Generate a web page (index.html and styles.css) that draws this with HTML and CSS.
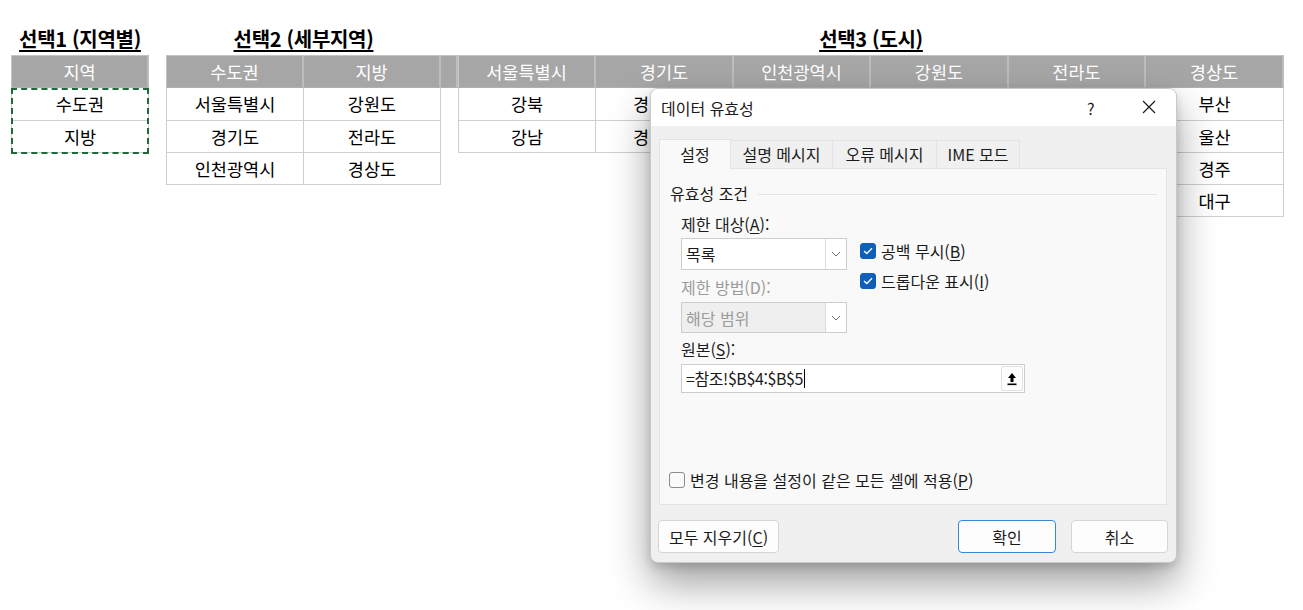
FILE: index.html
```html
<!DOCTYPE html>
<html lang="ko">
<head>
<meta charset="utf-8">
<title>데이터 유효성</title>
<link rel="stylesheet" href="styles.css">
</head>
<body>
<div class="sheet">
  <section class="group g1">
    <h2 class="title">선택1 (지역별)</h2>
    <div class="table">
      <div class="col w138 first">
        <div class="cell head">지역</div>
        <div class="selected">
          <div class="cell r1">수도권</div>
          <div class="cell">지방</div>
        </div>
      </div>
    </div>
  </section>

  <section class="group g2">
    <h2 class="title">선택2 (세부지역)</h2>
    <div class="table">
      <div class="col w138 first">
        <div class="cell head">수도권</div>
        <div class="cell r1">서울특별시</div>
        <div class="cell">경기도</div>
        <div class="cell">인천광역시</div>
      </div>
      <div class="col w137">
        <div class="cell head">지방</div>
        <div class="cell r1">강원도</div>
        <div class="cell">전라도</div>
        <div class="cell">경상도</div>
      </div>
    </div>
  </section>

  <div class="spacer"><div class="cell head"></div></div>

  <section class="group g3">
    <h2 class="title">선택3 (도시)</h2>
    <div class="table">
      <div class="col w138 first">
        <div class="cell head">서울특별시</div>
        <div class="cell r1">강북</div>
        <div class="cell">강남</div>
      </div>
      <div class="col w138">
        <div class="cell head">경기도</div>
        <div class="cell r1 clip">경</div>
        <div class="cell clip">경</div>
      </div>
      <div class="col w137">
        <div class="cell head">인천광역시</div>
        <div class="cell r1"></div>
        <div class="cell"></div>
      </div>
      <div class="col w138">
        <div class="cell head">강원도</div>
        <div class="cell r1"></div>
        <div class="cell"></div>
      </div>
      <div class="col w137">
        <div class="cell head">전라도</div>
        <div class="cell r1"></div>
        <div class="cell"></div>
      </div>
      <div class="col w138">
        <div class="cell head">경상도</div>
        <div class="cell r1">부산</div>
        <div class="cell">울산</div>
        <div class="cell">경주</div>
        <div class="cell">대구</div>
      </div>
    </div>
  </section>
</div>

<div class="dialog">
  <div class="titlebar">
    <span class="dtitle">데이터 유효성</span>
    <span class="help">?</span>
    <span class="close">
      <svg width="14" height="14" viewBox="0 0 14 14"><path d="M1 1L13 13M13 1L1 13" stroke="#1a1a1a" stroke-width="1.2" fill="none"/></svg>
    </span>
  </div>
  <div class="dbody">
    <div class="tabs">
      <div class="tab active t1">설정</div>
      <div class="tab t2">설명 메시지</div>
      <div class="tab t3">오류 메시지</div>
      <div class="tab t4">IME 모드</div>
    </div>
    <div class="panel">
      <div class="legend"><span>유효성 조건</span><span class="rule"></span></div>
      <div class="criteria">
        <div class="leftcol">
          <div class="label">제한 대상(<u>A</u>):</div>
          <div class="select">
            <span class="sval">목록</span>
            <span class="sarrow"><svg width="10" height="6" viewBox="0 0 10 6"><path d="M1 1L5 5L9 1" stroke="#6b6b6b" stroke-width="1" fill="none"/></svg></span>
          </div>
          <div class="label disabled l2">제한 방법(D):</div>
          <div class="select dis">
            <span class="sval">해당 범위</span>
            <span class="sarrow"><svg width="10" height="6" viewBox="0 0 10 6"><path d="M1 1L5 5L9 1" stroke="#6b6b6b" stroke-width="1" fill="none"/></svg></span>
          </div>
          <div class="label l3">원본(<u>S</u>):</div>
          <div class="input">
            <span class="ival">=참조!$B$4:$B$5<span class="caret"></span></span>
            <span class="ibtn"><svg width="10" height="14" viewBox="0 0 10 14"><path d="M5 1L9 6H6.5V10H3.5V6H1Z" fill="#000"/><rect x="0.5" y="11.5" width="9" height="1.6" fill="#000"/></svg></span>
          </div>
        </div>
        <div class="rightcol">
          <div class="check c1"><span class="box on"><svg width="10" height="8" viewBox="0 0 10 8"><path d="M1 4L3.8 6.6L9 1.2" stroke="#fff" stroke-width="1.4" fill="none"/></svg></span>공백 무시(<u>B</u>)</div>
          <div class="check c2"><span class="box on"><svg width="10" height="8" viewBox="0 0 10 8"><path d="M1 4L3.8 6.6L9 1.2" stroke="#fff" stroke-width="1.4" fill="none"/></svg></span>드롭다운 표시(<u>I</u>)</div>
        </div>
      </div>
      <div class="check apply"><span class="box"></span>변경 내용을 설정이 같은 모든 셀에 적용(<u>P</u>)</div>
    </div>
    <div class="buttons">
      <button class="btn clear">모두 지우기(<u>C</u>)</button>
      <span class="grow"></span>
      <button class="btn ok">확인</button>
      <button class="btn cancel">취소</button>
    </div>
  </div>
</div>
</body>
</html>
```

FILE: styles.css
```css
* { box-sizing: border-box; }
html, body { margin: 0; padding: 0; background: #fff; }
body {
  font-family: "Noto Sans CJK KR", "Noto Sans", sans-serif;
  color: #000;
  width: 1303px;
  height: 610px;
  overflow: hidden;
  position: relative;
}

.sheet {
  display: flex;
  align-items: flex-start;
  padding: 26px 0 0 11px;
}
.group { display: flex; flex-direction: column; }
.g2 { margin-left: 17px; }
.spacer { width: 17px; margin-top: 29px; }
.spacer .cell { border-left: none; }

.title {
  margin: 0;
  height: 29px;
  font-size: 20px;
  font-weight: 700;
  line-height: 26px;
  text-align: center;
  text-decoration: underline;
  text-decoration-thickness: 1.5px;
  text-underline-offset: 3px;
  letter-spacing: -0.3px;
  white-space: nowrap;
}

.table { display: flex; align-items: flex-start; }
.col { display: flex; flex-direction: column; }
.w138 { width: 138px; }
.w137 { width: 137px; }

.cell {
  height: 32px;
  border-right: 1px solid #cfcfcf;
  border-bottom: 1px solid #cfcfcf;
  font-size: 17.5px;
  line-height: 31px;
  text-align: center;
  white-space: nowrap;
}
.cell.clip { text-align: left; padding-left: 37px; }
.col.first .cell { border-left: 1px solid #cfcfcf; }
.cell.r1 { height: 33px; line-height: 32px; }
.cell.head {
  height: 33px;
  line-height: 32px;
  background: #a6a6a6;
  color: #fff;
  border-top: 1px solid #c4c4c4;
  border-right: 2px solid #bdbdbd;
  border-bottom: 1px solid #b0b0b0;
}
.col.first .cell.head { border-left: 1px solid #c4c4c4; }

.selected { position: relative; }
.selected::after {
  content: "";
  position: absolute;
  left: 0; top: 0; right: 0; bottom: -1px;
  border: 2px dashed #1e6b3a;
}

/* Dialog */
.dialog {
  position: absolute;
  left: 650px;
  top: 88px;
  width: 527px;
  height: 475px;
  border-radius: 8px;
  border: 1px solid #c9c9c9;
  background: #f0f0f0;
  box-shadow: 0 20px 40px rgba(0,0,0,0.38), 0 4px 10px rgba(0,0,0,0.15);
  overflow: hidden;
  font-size: 16px;
  color: #1b1b1b;
  display: flex;
  flex-direction: column;
}
.titlebar {
  height: 37px;
  background: #fff;
  display: flex;
  align-items: center;
  padding-left: 10px;
  position: relative;
}
.dtitle { font-size: 16px; }
.help {
  position: absolute;
  left: 436px;
  top: 7px;
  font-size: 16px;
}
.close {
  position: absolute;
  left: 491px;
  top: 11px;
  width: 14px;
  height: 14px;
  display: flex;
}

.dbody {
  flex: 1;
  display: flex;
  flex-direction: column;
  padding: 14px 9px 9px 8px;
}
.tabs { display: flex; height: 28px; align-items: flex-end; }
.tab {
  height: 28px;
  line-height: 26px;
  text-align: center;
  border: 1px solid #e3e3e3;
  border-bottom: none;
  border-left: none;
  background: #f0f0f0;
  color: #1b1b1b;
  font-size: 16px;
  white-space: nowrap;
}
.tab.active {
  height: 30px;
  background: #f9f9f9;
  border-left: 1px solid #e3e3e3;
  position: relative;
  z-index: 2;
  margin-bottom: -1px;
  line-height: 28px;
}
.t1 { width: 72px; }
.t2 { width: 102px; }
.t3 { width: 104px; }
.t4 { width: 83px; }

.panel {
  width: 508px;
  height: 337px;
  background: #f9f9f9;
  border: 1px solid #e3e3e3;
  display: flex;
  flex-direction: column;
  padding: 13px 9px 14px 10px;
}
.legend {
  display: flex;
  align-items: center;
  height: 22px;
}
.rule {
  flex: 1;
  height: 1px;
  background: #e3e3e3;
  margin-left: 10px;
  margin-top: 3px;
}
.criteria {
  display: flex;
  padding-left: 11px;
  margin-top: 10px;
}
.leftcol { display: flex; flex-direction: column; width: 344px; }
.label { height: 20px; line-height: 20px; white-space: nowrap; }
.label u, .check u, .btn u { text-decoration-thickness: 1px; text-underline-offset: 2px; }
.disabled { color: #9b9b9b; }
.l2 { margin-top: 7px; }
.l3 { margin-top: 6px; }

.select {
  margin-top: 4px;
  width: 166px;
  height: 32px;
  border: 1px solid #cdcdcd;
  background: #fff;
  display: flex;
  align-items: stretch;
}
.select.dis { margin-top: 5px; height: 31px; background: #efefef; }
.sval { flex: 1; padding-left: 4px; line-height: 30px; }
.select.dis .sval { color: #9b9b9b; }
.sarrow {
  width: 21px;
  border-left: 1px solid #dcdcdc;
  background: #fff;
  display: flex;
  align-items: center;
  justify-content: center;
}

.input {
  margin-top: 5px;
  width: 344px;
  height: 29px;
  border: 1px solid #cdcdcd;
  background: #fff;
  display: flex;
  align-items: center;
  padding-right: 1px;
}
.ival { flex: 1; padding-left: 4px; line-height: 27px; letter-spacing: -0.4px; display: flex; align-items: center; }
.caret { display: inline-block; width: 1px; height: 19px; background: #000; margin-left: 1px; }
.ibtn {
  width: 22px;
  height: 25px;
  border: 1px solid #e0e0e0;
  border-radius: 2px;
  background: #fdfdfd;
  display: flex;
  align-items: center;
  justify-content: center;
}

.rightcol {
  display: flex;
  flex-direction: column;
  margin-left: -165px;
}
.check {
  display: flex;
  align-items: center;
  height: 20px;
  line-height: 20px;
  white-space: nowrap;
}
.c1 { margin-top: 27px; }
.c2 { margin-top: 10px; }
.box {
  width: 16px;
  height: 16px;
  border-radius: 3px;
  border: 1px solid #8b8b8b;
  background: #fafafa;
  margin-right: 5px;
  display: flex;
  align-items: center;
  justify-content: center;
  flex: none;
}
.box.on { background: #0f5fb8; border-color: #0f5fb8; }
.apply { margin-top: auto; margin-left: -1px; }

.buttons {
  display: flex;
  margin-top: 15px;
  height: 33px;
}
.grow { flex: 1; }
.btn {
  font-family: inherit;
  font-size: 16px;
  color: #1b1b1b;
  height: 33px;
  background: #fdfdfd;
  border: 1px solid #d5d5d5;
  border-radius: 4px;
  padding: 0;
}
.clear { width: 121px; margin-left: -1px; }
.ok { width: 98px; border-color: #3b86d1; }
.cancel { width: 97px; margin-left: 15px; margin-right: -1px; }
```
